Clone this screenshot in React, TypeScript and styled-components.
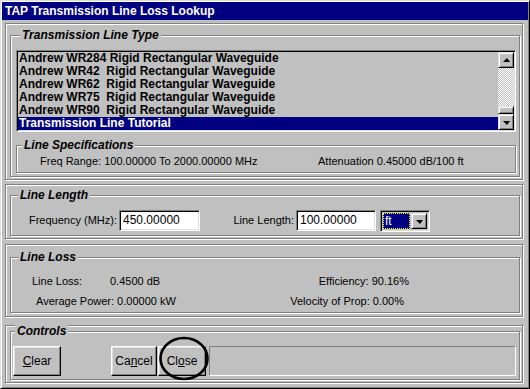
import React from 'react';
import styled, { createGlobalStyle } from 'styled-components';

const GlobalStyle = createGlobalStyle`
  html, body {
    margin: 0;
    padding: 0;
    background: #c0c0c0;
  }
  body {
    font-family: "Liberation Sans", Arial, sans-serif;
    font-size: 11px;
    color: #000;
  }
  * {
    box-sizing: border-box;
  }
`;

const Window = styled.div`
  position: relative;
  width: 530px;
  height: 389px;
  background: #c0c0c0;
  border: 1px solid;
  border-color: #dfdfdf #000 #000 #dfdfdf;
  box-shadow: inset 1px 1px #fff, inset -1px -1px #808080;
  padding: 1px;
  display: flex;
  flex-direction: column;
`;

const TitleBar = styled.div`
  height: 18px;
  background: #000080;
  color: #fff;
  font-weight: bold;
  font-size: 12px;
  padding-left: 3px;
  display: flex;
  align-items: center;
`;

const Body = styled.div`
  padding: 0 5px 0 3px;
  display: flex;
  flex-direction: column;
`;

const Section = styled.div<{ $mt: number; $pt: number; $pb: number }>`
  margin-top: ${p => p.$mt}px;
  border: 1px solid #808080;
  box-shadow: inset 1px 1px #fff, 1px 1px #fff;
  padding: ${p => p.$pt}px 2px ${p => p.$pb}px 4px;
`;

const GroupBox = styled.div<{ $pt: number; $pb: number; $pl?: number; $pr?: number }>`
  position: relative;
  border: 1px solid #808080;
  box-shadow: inset 1px 1px #fff, 1px 1px #fff;
  padding: ${p => p.$pt}px ${p => p.$pr ?? 3}px ${p => p.$pb}px ${p => p.$pl ?? 5}px;
`;

const Legend = styled.span<{ $left: number }>`
  position: absolute;
  top: -8px;
  left: ${p => p.$left}px;
  padding: 0 2px;
  background: #c0c0c0;
  font-weight: bold;
  font-style: italic;
  font-size: 12px;
  line-height: 14px;
  white-space: nowrap;
`;

const ListBox = styled.div`
  height: 82px;
  display: flex;
  background: #c0c0c0;
  border: 1px solid;
  border-color: #808080 #fff #fff #808080;
  box-shadow: inset 1px 1px #000, inset -1px -1px #dfdfdf;
  padding: 1px;
`;

const Items = styled.div`
  flex: 1;
  display: flex;
  flex-direction: column;
`;

const Item = styled.div<{ $selected?: boolean }>`
  height: 13px;
  line-height: 13px;
  padding-left: 1px;
  font-weight: bold;
  font-size: 12px;
  white-space: pre;
  overflow: hidden;
  background: ${p => (p.$selected ? '#000080' : 'transparent')};
  color: ${p => (p.$selected ? '#fff' : '#000')};
`;

const ScrollBar = styled.div`
  width: 16px;
  display: flex;
  flex-direction: column;
`;

const ScrollButton = styled.div`
  height: 16px;
  flex: none;
  background: #c0c0c0;
  border: 1px solid;
  border-color: #dfdfdf #000 #000 #dfdfdf;
  box-shadow: inset 1px 1px #fff, inset -1px -1px #808080;
  display: flex;
  align-items: center;
  justify-content: center;
`;

const Thumb = styled(ScrollButton)`
  height: 8px;
`;

const Track = styled.div`
  flex: 1;
  background-color: #fff;
  background-image: repeating-conic-gradient(#c0c0c0 0% 25%, #fff 0% 50%);
  background-size: 2px 2px;
`;

const Arrow = styled.span<{ $dir: 'up' | 'down' }>`
  width: 0;
  height: 0;
  border-left: 4px solid transparent;
  border-right: 3px solid transparent;
  ${p =>
    p.$dir === 'up'
      ? 'border-bottom: 4px solid #000; margin-top: -1px;'
      : 'border-top: 4px solid #000; margin-top: 1px;'}
`;

const SpecBox = styled.div`
  position: relative;
  margin-top: 13px;
  border: 1px solid #808080;
  box-shadow: inset 1px 1px #fff, 1px 1px #fff;
  padding: 9px 0 4px 23px;
  display: grid;
  grid-template-columns: 278px auto;
  line-height: 13px;
`;

const FieldRow = styled.div`
  display: flex;
  align-items: flex-start;
  height: 21px;
`;

const FieldLabel = styled.span<{ $width: number }>`
  width: ${p => p.$width}px;
  text-align: right;
  padding-top: 4px;
  line-height: 13px;
  white-space: nowrap;
`;

const TextBox = styled.div<{ $width: number; $ml: number }>`
  width: ${p => p.$width}px;
  height: 21px;
  margin-left: ${p => p.$ml}px;
  background: #fff;
  border: 1px solid;
  border-color: #808080 #fff #fff #808080;
  box-shadow: inset 1px 1px #000, inset -1px -1px #dfdfdf;
  padding: 2px 2px 0 3px;
  font-size: 12px;
  line-height: 14px;
`;

const Combo = styled.div`
  width: 50px;
  height: 22px;
  margin-left: 4px;
  display: flex;
  gap: 1px;
  background: #c0c0c0;
  border: 1px solid;
  border-color: #808080 #fff #fff #808080;
  box-shadow: inset 1px 1px #000, inset -1px -1px #dfdfdf;
  padding: 2px;
`;

const ComboValue = styled.div`
  flex: 1;
  background: #000080;
  color: #fff;
  outline: 1px dotted #ffff00;
  outline-offset: -1px;
  padding-left: 2px;
  font-size: 12px;
  line-height: 16px;
`;

const DropButton = styled(ScrollButton)`
  width: 16px;
  height: 16px;
`;

const ResultGrid = styled.div`
  display: grid;
  grid-template-columns: 232px 145px;
  row-gap: 7px;
  line-height: 13px;
`;

const Cell = styled.div<{ $pl?: number; $pr?: number; $right?: boolean }>`
  display: flex;
  padding-left: ${p => p.$pl ?? 0}px;
  padding-right: ${p => p.$pr ?? 0}px;
  justify-content: ${p => (p.$right ? 'flex-end' : 'flex-start')};
  white-space: pre;
`;

const ResultLabel = styled.span`
  width: 78px;
`;

const ControlsRow = styled.div`
  display: flex;
  height: 30px;
`;

const Button = styled.button<{ $width: number; $ml: number }>`
  width: ${p => p.$width}px;
  height: 30px;
  margin-left: ${p => p.$ml}px;
  padding: 0;
  background: #c0c0c0;
  border: 1px solid;
  border-color: #fff #000 #000 #fff;
  box-shadow: inset -1px -1px #808080, inset 1px 1px #dfdfdf;
  font-family: "Liberation Sans", Arial, sans-serif;
  font-size: 12px;
  color: #000;
`;

const StatusPanel = styled.div`
  flex: 1;
  margin-left: 3px;
  border: 1px solid;
  border-color: #808080 #fff #fff #808080;
`;

const Annotation = styled.svg`
  position: absolute;
  left: 157px;
  top: 334px;
  overflow: visible;
`;

const lineTypes = [
  'Andrew WR284 Rigid Rectangular Waveguide',
  'Andrew WR42  Rigid Rectangular Waveguide',
  'Andrew WR62  Rigid Rectangular Waveguide',
  'Andrew WR75  Rigid Rectangular Waveguide',
  'Andrew WR90  Rigid Rectangular Waveguide',
  'Transmission Line Tutorial',
];

export default function App() {
  const selected = lineTypes.length - 1;

  return (
    <>
      <GlobalStyle />
      <Window>
        <TitleBar>TAP Transmission Line Loss Lookup</TitleBar>
        <Body>
          <Section $mt={3} $pt={11} $pb={2}>
            <GroupBox $pt={14} $pb={3}>
              <Legend $left={9}>Transmission Line Type</Legend>
              <ListBox>
                <Items>
                  {lineTypes.map((t, i) => (
                    <Item key={t} $selected={i === selected}>{t}</Item>
                  ))}
                </Items>
                <ScrollBar>
                  <ScrollButton><Arrow $dir="up" /></ScrollButton>
                  <Track />
                  <Thumb />
                  <ScrollButton><Arrow $dir="down" /></ScrollButton>
                </ScrollBar>
              </ListBox>
              <SpecBox>
                <Legend $left={5}>Line Specifications</Legend>
                <span>Freq Range: 100.00000 To 2000.00000 MHz</span>
                <span>Attenuation 0.45000 dB/100 ft</span>
              </SpecBox>
            </GroupBox>
          </Section>

          <Section $mt={4} $pt={10} $pb={2}>
            <GroupBox $pt={14} $pb={4} $pl={0}>
              <Legend $left={7}>Line Length</Legend>
              <FieldRow>
                <FieldLabel $width={106}>Frequency (MHz):</FieldLabel>
                <TextBox $width={81} $ml={2}>450.00000</TextBox>
                <FieldLabel $width={94}>Line Length:</FieldLabel>
                <TextBox $width={80} $ml={2}>100.00000</TextBox>
                <Combo>
                  <ComboValue>ft</ComboValue>
                  <DropButton><Arrow $dir="down" /></DropButton>
                </Combo>
              </FieldRow>
            </GroupBox>
          </Section>

          <Section $mt={5} $pt={12} $pb={3}>
            <GroupBox $pt={17} $pb={4} $pl={21}>
              <Legend $left={7}>Line Loss</Legend>
              <ResultGrid>
                <Cell>
                  <ResultLabel>Line Loss:</ResultLabel>
                  <span>0.4500 dB</span>
                </Cell>
                <Cell $right>Efficiency: 90.16%</Cell>
                <Cell $pl={4}>Average Power: 0.00000 kW</Cell>
                <Cell $right $pr={5}>Velocity of Prop: 0.00%</Cell>
              </ResultGrid>
            </GroupBox>
          </Section>

          <Section $mt={8} $pt={5} $pb={2}>
            <GroupBox $pt={14} $pb={3} $pl={2}>
              <Legend $left={4}>Controls</Legend>
              <ControlsRow>
                <Button $width={48} $ml={0}><u>C</u>lear</Button>
                <Button $width={46} $ml={50}>Ca<u>n</u>cel</Button>
                <Button $width={48} $ml={1}>Cl<u>o</u>se</Button>
                <StatusPanel />
              </ControlsRow>
            </GroupBox>
          </Section>
        </Body>
        <Annotation width="52" height="47" viewBox="0 0 52 47">
          <ellipse cx="26" cy="23.5" rx="23.5" ry="20.5" fill="none" stroke="#000" strokeWidth="2.6" />
        </Annotation>
      </Window>
    </>
  );
}
